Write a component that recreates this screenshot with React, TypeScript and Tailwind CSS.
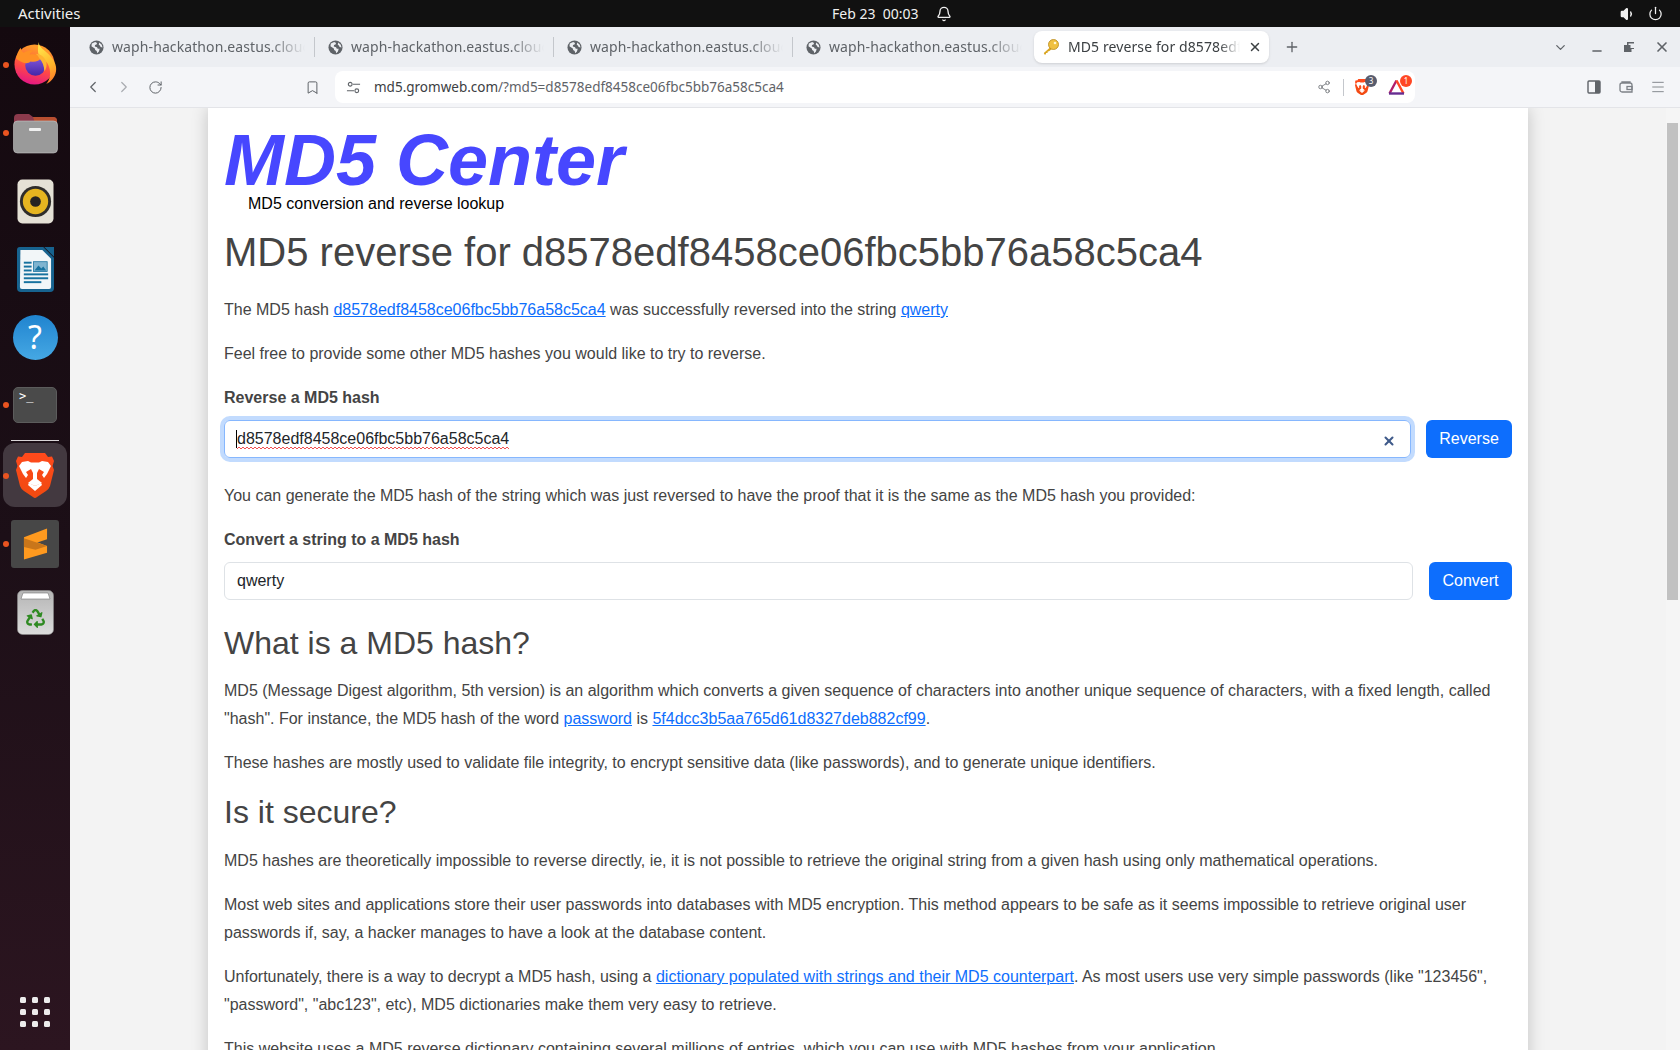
import { Bell, Bookmark, ChevronDown, ChevronLeft, ChevronRight, Menu, Minus, Plus, Power, RotateCw, Share2, Volume1, X } from "lucide-react";
import { FaRecycle } from "react-icons/fa";

const HASH = "d8578edf8458ce06fbc5bb76a58c5ca4";

function GlobeIcon() {
  return (
    <svg viewBox="0 0 16 16" className="w-[15px] h-[15px] shrink-0">
      <circle cx="8" cy="8" r="7.5" fill="#5f6368" />
      <path d="M3 3.6 6.6 2l2 1.2-.6 1.6-1.6.4-.2 1.6 2.4.8.8 1.6 2 .2-.8 2.8L8.8 14l-.6-2.4-1.6-1-.4-1.6L2.6 6.6Z" fill="#eceef2" />
      <path d="M11 2.6 13.6 5l.8 3-2-.6-.8-1.6L10.4 5Z" fill="#eceef2" />
    </svg>
  );
}

function Tab({ last }: { last?: boolean }) {
  return (
    <div className="w-[239px] h-[32px] flex items-center pl-[19px] shrink-0 relative">
      <GlobeIcon />
      <span className="ml-[8px] -mt-[2px] w-[193px] overflow-hidden whitespace-nowrap text-[14px] tracking-[0.1px] text-[#5f6368] [mask-image:linear-gradient(to_right,black_82%,transparent)]">
        waph-hackathon.eastus.cloudapp.azure.com
      </span>
      {!last && <div className="absolute -right-[6px] top-[6px] h-[20px] w-px bg-[#c4c7cc]" />}
    </div>
  );
}

function KeyIcon() {
  return (
    <svg viewBox="0 0 18 18" className="w-[18px] h-[18px] shrink-0">
      <path d="M8 9.5 1.8 15l.6 1.6 1.4-.2.3-1.3 1.4-.2.2-1.4 1.3-.3L10 11Z" fill="#d9a520" />
      <circle cx="11.5" cy="6.5" r="5" fill="#f0c040" stroke="#b8891a" strokeWidth="0.8" />
      <circle cx="13" cy="5" r="1.3" fill="#fff6d0" />
    </svg>
  );
}

function DockItem({ running, active, children }: { running?: boolean; active?: boolean; children: React.ReactNode }) {
  return (
    <div className="h-[68px] w-[70px] flex items-center justify-center relative shrink-0">
      {active && <div className="absolute left-[3px] top-[1px] w-[64px] h-[64px] rounded-[12px] bg-[#433940]" />}
      {running && <div className="absolute left-[3px] top-[31px] w-[6px] h-[6px] rounded-full bg-[#e95420]" />}
      <div className="relative">{children}</div>
    </div>
  );
}

function Firefox() {
  return (
    <svg viewBox="0 0 44 44" className="w-[43px] h-[43px] -mt-[4px]">
      <defs>
        <linearGradient id="ff1" x1="0.6" y1="0.1" x2="0.35" y2="1">
          <stop offset="0" stopColor="#ff9a2a" />
          <stop offset="0.55" stopColor="#ff4a45" />
          <stop offset="1" stopColor="#e31587" />
        </linearGradient>
        <linearGradient id="ff2" x1="0.4" y1="0" x2="0.7" y2="1">
          <stop offset="0" stopColor="#ffe54a" />
          <stop offset="0.6" stopColor="#ffb32a" />
          <stop offset="1" stopColor="#ff7a2a" />
        </linearGradient>
        <linearGradient id="ff3" x1="0.5" y1="0" x2="0.5" y2="1">
          <stop offset="0" stopColor="#8a5ce0" />
          <stop offset="1" stopColor="#4326a8" />
        </linearGradient>
      </defs>
      <circle cx="21" cy="23" r="20.5" fill="url(#ff1)" />
      <path d="M25 0c1 6 6 8 11 13 5 5 8 11 7 17-1 6-5 11-10 13 4-5 5-11 3-17-2-7-7-9-11-14-1-3 0-9 0-12Z" fill="url(#ff2)" />
      <circle cx="22" cy="24" r="10.5" fill="url(#ff3)" />
      <path d="M2 17C3 12 5 8 7 6c0 3 1 4 3 5 3-2 6-3 10-2-2 1-3 2-4 4 4-1 9 0 12 3-2 3-6 5-11 4-2 2-5 2-8 1-2-1-5-2-7-4Z" fill="#ff9125" />
      <path d="M22 12c5 0 9 3 11 8 1 4 0 8-2 10 0-5-2-10-5-13-1-2-2-4-4-5Z" fill="#ffb432" />
    </svg>
  );
}

function Files() {
  return (
    <svg viewBox="0 0 45 42" className="w-[45px] h-[42px]">
      <path d="M1 6a4 4 0 0 1 4-4h11l4 3h20a4 4 0 0 1 4 4v12H1Z" fill="#8c3a4c" />
      <path d="M20 5h20a4 4 0 0 1 4 4v8H24Z" fill="#b84f30" />
      <rect x="0.5" y="9" width="44" height="32" rx="4" fill="#9a9a9a" stroke="#c8c8c8" strokeWidth="0.6" />
      <rect x="16" y="16" width="12" height="3" rx="1" fill="#f0f0f0" />
    </svg>
  );
}

function Rhythmbox() {
  return (
    <svg viewBox="0 0 38 46" className="w-[37px] h-[45px]">
      <rect x="0.5" y="0.5" width="37" height="45" rx="5" fill="#e5e1d6" />
      <circle cx="19" cy="23" r="16" fill="#2f2d2b" />
      <circle cx="19" cy="23" r="13" fill="#e6b520" />
      <circle cx="19" cy="23" r="5.5" fill="#262422" />
    </svg>
  );
}

function Writer() {
  return (
    <svg viewBox="0 0 38 46" className="w-[37px] h-[45px]">
      <path d="M3 0h24l11 11v31a4 4 0 0 1-4 4H4a4 4 0 0 1-4-4V3a3 3 0 0 1 3-3Z" fill="#17638f" />
      <path d="M3.5 3H26l9 9v29a2 2 0 0 1-2 2H5a2 2 0 0 1-2-2Z" fill="#f2f6f8" />
      <path d="M28 0h10v10Z" fill="#17638f" />
      <g fill="#17729f">
        <rect x="7" y="15" width="8" height="2" />
        <rect x="7" y="19" width="8" height="2" />
        <rect x="7" y="23" width="8" height="2" />
        <rect x="7" y="27" width="25" height="2" />
        <rect x="7" y="31" width="25" height="2" />
        <rect x="7" y="35" width="18" height="2" />
      </g>
      <rect x="17" y="15" width="14" height="10" fill="#7fb4d0" stroke="#17729f" strokeWidth="0.8" />
      <path d="M18 24l4-5 3 3 2-2 3 4Z" fill="#17729f" />
    </svg>
  );
}

function Help() {
  return (
    <div className="w-[45px] h-[45px] rounded-full bg-linear-to-b from-[#1f84cf] to-[#45a8e4] flex items-center justify-center text-white text-[32px] leading-none font-['Noto_Sans',sans-serif]">
      ?
    </div>
  );
}

function Terminal() {
  return (
    <div className="w-[44px] h-[36px] rounded-[5px] bg-[#4a4a4a] border border-[#5c5c5c] pl-[5px] text-white text-[12px] leading-[16px] font-['DejaVu_Sans_Mono',monospace]">
      &gt;_
    </div>
  );
}

function BraveLion({ width }: { width: number }) {
  return (
    <svg viewBox="0 0 38 46" style={{ width, height: (width * 46) / 38 }} className="block">
      <defs>
        <linearGradient id="brv" x1="0" y1="0" x2="0" y2="1">
          <stop offset="0" stopColor="#ff4a1c" />
          <stop offset="1" stopColor="#f04a10" />
        </linearGradient>
      </defs>
      <path d="M9 0H29L32 4 36 3.5 38 8 36.5 13 38 17 34 33Q33 36 30 38L21 44Q19 46 17 44L8 38Q5 36 4 33L0 17 1.5 13 0 8 2 3.5 6 4Z" fill="url(#brv)" />
      <path d="M3 13 6 9 12 8 15 9.5H23L26 8 32 9 35 13 31 21 28 25 26 22 28 19 23 16 21 20V26L26 30 19 33 12 30 17 26V20L15 16 10 19 12 22 10 25 7 21Z" fill="#fff" />
      <path d="M13 30 19 33 25 30 26 32 19 38 12 32Z" fill="#fff" />
    </svg>
  );
}

function Sublime() {
  return (
    <div className="w-[48px] h-[48px] rounded-[3px] bg-[#474747] flex items-center justify-center">
      <svg viewBox="0 0 26 32" className="w-[25px] h-[32px]">
        <path d="M25 0v11L1 19V9Z" fill="#ff9a1f" />
        <path d="M1 9l24 9v7L1 32V19l12-4Z" fill="#ff9a1f" />
        <path d="M1 10l24 8-12 4L1 19Z" fill="#c9761a" />
      </svg>
    </div>
  );
}

function Trash() {
  return (
    <div className="relative w-[37px] h-[45px]">
      <svg viewBox="0 0 37 45" className="w-[37px] h-[45px]">
        <defs>
          <linearGradient id="tr" x1="0" y1="0" x2="0" y2="1">
            <stop offset="0" stopColor="#b5b5b5" />
            <stop offset="1" stopColor="#dcdcdc" />
          </linearGradient>
        </defs>
        <rect x="0.5" y="0.5" width="36" height="44" rx="5" fill="url(#tr)" stroke="#8a8a8a" strokeWidth="0.6" />
        <path d="M4 9l2-6h25l2 6Z" fill="#fff" stroke="#777" strokeWidth="0.6" />
      </svg>
      <FaRecycle size={19} className="absolute left-[9px] top-[19px] text-[#2f8a22]" />
    </div>
  );
}

function AppGrid() {
  return (
    <div className="grid grid-cols-3 gap-[6px]">
      {Array.from({ length: 9 }).map((_, i) => (
        <div key={i} className="w-[6px] h-[6px] rounded-[1.5px] bg-[#ececec]" />
      ))}
    </div>
  );
}

function Dock() {
  return (
    <aside className="w-[70px] shrink-0 pt-[4px] pb-[23px] flex flex-col bg-linear-to-b from-[#14090f] via-[#1c0f17] to-[#2c1520]">
      <DockItem running><Firefox /></DockItem>
      <DockItem running><Files /></DockItem>
      <DockItem><Rhythmbox /></DockItem>
      <DockItem><Writer /></DockItem>
      <DockItem><Help /></DockItem>
      <DockItem running><Terminal /></DockItem>
      <div className="h-[3px] flex items-center justify-center shrink-0">
        <div className="w-[48px] h-px bg-[#d8d4d6]" />
      </div>
      <DockItem running active><BraveLion width={38} /></DockItem>
      <DockItem running><Sublime /></DockItem>
      <DockItem><Trash /></DockItem>
      <div className="mt-auto flex justify-center"><AppGrid /></div>
    </aside>
  );
}

function TabBar() {
  return (
    <div className="h-[40px] bg-[#eceef2] flex items-start pt-[4px] text-[#3c4043] shrink-0">
      <Tab />
      <Tab />
      <Tab />
      <Tab last />
      <div className="w-[235px] h-[32px] ml-[8px] bg-white rounded-[8px] shadow-sm flex items-center pl-[8px] shrink-0">
        <KeyIcon />
        <span className="ml-[8px] -mt-[2px] w-[172px] mr-[6px] overflow-hidden whitespace-nowrap text-[14px] tracking-[0.1px] text-[#3c4043] [mask-image:linear-gradient(to_right,black_88%,transparent)]">
          MD5 reverse for {HASH}
        </span>
        <X size={14} strokeWidth={2.5} className="ml-[2px] text-[#3c4043]" />
      </div>
      <Plus size={16} strokeWidth={2} className="ml-[15px] mt-[8px] text-[#5f6368]" />
      <div className="ml-auto flex items-center h-[32px] pr-[10px] text-[#5f6368]">
        <ChevronDown size={15} className="mr-[22px]" />
        <Minus size={14} strokeWidth={2.5} className="mr-[19px] mt-[8px]" />
        <svg viewBox="0 0 12 12" className="w-[12px] h-[12px] mr-[19px]">
          <path d="M4 1h7v7H8.5v3H1V4h3Z M5.5 2.5V4h2v3H11V2.5Z" fill="#5f6368" fillRule="evenodd" />
        </svg>
        <X size={16} strokeWidth={2.5} />
      </div>
    </div>
  );
}

function Toolbar() {
  return (
    <div className="h-[41px] bg-[#f4f5f8] border-b border-[#e3e4e8] flex items-start pt-[4px] shrink-0 text-[#5f6368]">
      <div className="flex items-center h-[32px] pl-[14px]">
        <ChevronLeft size={18} strokeWidth={1.6} />
        <ChevronRight size={18} strokeWidth={1.6} className="ml-[13px] text-[#a8abb0]" />
        <RotateCw size={15} strokeWidth={1.6} className="ml-[15px]" />
        <Bookmark size={15} strokeWidth={1.6} className="ml-[142px]" />
      </div>
      <div className="ml-[15px] w-[1080px] h-[32px] bg-white rounded-[8px] flex items-center pl-[11px]">
        <svg viewBox="0 0 16 16" className="w-[15px] h-[15px] shrink-0" fill="none" stroke="#5f6368" strokeWidth="1.2">
          <circle cx="4.5" cy="4.5" r="2" />
          <path d="M7.5 4.5H15M1 11.5h7.5" />
          <circle cx="11.5" cy="11.5" r="2" />
        </svg>
        <span className="ml-[13px] text-[13.5px] text-[#3c4043]">
          md5.gromweb.com<span className="text-[#5f6368]">/?md5={HASH}</span>
        </span>
        <Share2 size={14} strokeWidth={1.3} className="ml-auto mr-[12px]" />
        <div className="w-px h-[17px] bg-[#c4c7cc] mr-[11px]" />
        <div className="relative mr-[19px]">
          <BraveLion width={14} />
          <div className="absolute -top-[4px] -right-[8px] w-[12px] h-[12px] rounded-full bg-[#585c6d] text-white text-[8px] leading-[12px] text-center">3</div>
        </div>
        <div className="relative mr-[10px]">
          <svg viewBox="0 0 17 16" className="block w-[17px] h-[16px]">
            <path d="M8.5 1.5 1.5 14.5" stroke="#b01f6a" strokeWidth="2.4" />
            <path d="M8.5 1.5 15.5 14.5" stroke="#ff4724" strokeWidth="2.4" />
            <path d="M1 14.5h15" stroke="#662d91" strokeWidth="2.4" />
            <path d="M8.5 7 5.5 12.5h6Z" fill="#fff" />
          </svg>
          <div className="absolute -top-[4px] -right-[7px] w-[12px] h-[12px] rounded-full bg-[#ff4724] text-white text-[8px] leading-[12px] text-center">1</div>
        </div>
      </div>
      <div className="ml-[172px] flex items-center h-[32px]">
        <svg viewBox="0 0 14 14" className="w-[14px] h-[14px]">
          <rect x="1" y="1" width="12" height="12" rx="1" fill="none" stroke="#5f6368" strokeWidth="1.4" />
          <rect x="8" y="1" width="5" height="12" fill="#5f6368" />
        </svg>
        <svg viewBox="0 0 14 14" className="w-[14px] h-[14px] ml-[18px]" fill="none" stroke="#7d8187" strokeWidth="1.3">
          <path d="M3 3V2h8v1M1 5a2 2 0 0 1 2-2h8a2 2 0 0 1 2 2v7H3a2 2 0 0 1-2-2Z" />
          <rect x="8" y="6.5" width="5" height="3" />
        </svg>
        <Menu size={16} strokeWidth={1.4} className="ml-[17px] text-[#7d8187]" />
      </div>
    </div>
  );
}

function A({ children }: { children: React.ReactNode }) {
  return <a className="text-[#0d6efd] underline">{children}</a>;
}

function Squiggle() {
  return (
    <svg className="absolute left-[13px] top-[26px] w-[272px] h-[4px]">
      <defs>
        <pattern id="squig" width="4" height="4" patternUnits="userSpaceOnUse">
          <path d="M0 3 2 1 4 3" fill="none" stroke="#ef3b3b" strokeWidth="0.9" />
        </pattern>
      </defs>
      <rect width="272" height="4" fill="url(#squig)" />
    </svg>
  );
}

function Page() {
  return (
    <main className="w-[1320px] ml-[138px] min-h-[1100px] bg-white px-[16px] shadow-[0_0_16px_rgba(0,0,0,0.2)] text-[16px] leading-[28px] text-[#444] font-['Liberation_Sans',sans-serif]">
      <div className="h-[84px] pt-[10px] text-[72px] leading-[84px] font-bold italic text-[#4747ff] whitespace-nowrap">MD5 Center</div>
      <div className="pl-[24px] text-black leading-[24px]">MD5 conversion and reverse lookup</div>
      <h1 className="text-[40px] leading-[48px] mt-[12px] mb-[20px]">MD5 reverse for {HASH}</h1>

      <p className="mb-4">The MD5 hash <A>{HASH}</A> was successfully reversed into the string <A>qwerty</A></p>
      <p className="mb-4">Feel free to provide some other MD5 hashes you would like to try to reverse.</p>

      <label className="block font-bold mb-[8px]">Reverse a MD5 hash</label>
      <div className="flex gap-[16px] mb-[24px]">
        <div className="relative flex-1 mr-[-1px]">
          <input
            readOnly
            spellCheck={false}
            value={HASH}
            className="block w-full h-[38px] rounded-[6px] border border-[#86b7fe] px-[12px] text-[#212529] shadow-[0_0_0_4px_rgba(13,110,253,0.25)] outline-none"
          />
          <Squiggle />
          <div className="absolute left-[12px] top-[10px] w-px h-[18px] bg-black" />
          <X size={14} strokeWidth={3.5} className="absolute right-[15px] top-[14px] text-[#3f5a8a]" />
        </div>
        <button className="w-[86px] h-[38px] rounded-[6px] bg-[#0d6efd] text-white shrink-0">Reverse</button>
      </div>

      <p className="mb-4">You can generate the MD5 hash of the string which was just reversed to have the proof that it is the same as the MD5 hash you provided:</p>

      <label className="block font-bold mb-[8px]">Convert a string to a MD5 hash</label>
      <div className="flex gap-[16px] mb-[24px]">
        <input
          readOnly
          value="qwerty"
          className="block flex-1 h-[38px] rounded-[6px] border border-[#dee2e6] px-[12px] text-[#212529] outline-none"
        />
        <button className="w-[83px] h-[38px] rounded-[6px] bg-[#0d6efd] text-white shrink-0">Convert</button>
      </div>

      <h2 className="text-[32px] leading-[38px] mb-[15px]">What is a MD5 hash?</h2>
      <p className="mb-4">
        MD5 (Message Digest algorithm, 5th version) is an algorithm which converts a given sequence of characters into another unique sequence of characters, with a fixed length, called "hash". For instance, the MD5 hash of the word <A>password</A> is <A>5f4dcc3b5aa765d61d8327deb882cf99</A>.
      </p>
      <p className="mb-4">These hashes are mostly used to validate file integrity, to encrypt sensitive data (like passwords), and to generate unique identifiers.</p>

      <h2 className="text-[32px] leading-[38px] mb-4">Is it secure?</h2>
      <p className="mb-4">MD5 hashes are theoretically impossible to reverse directly, ie, it is not possible to retrieve the original string from a given hash using only mathematical operations.</p>
      <p className="mb-4">Most web sites and applications store their user passwords into databases with MD5 encryption. This method appears to be safe as it seems impossible to retrieve original user passwords if, say, a hacker manages to have a look at the database content.</p>
      <p className="mb-4">
        Unfortunately, there is a way to decrypt a MD5 hash, using a <A>dictionary populated with strings and their MD5 counterpart</A>. As most users use very simple passwords (like "123456", "password", "abc123", etc), MD5 dictionaries make them very easy to retrieve.
      </p>
      <p className="mb-4">This website uses a MD5 reverse dictionary containing several millions of entries, which you can use with MD5 hashes from your application.</p>
    </main>
  );
}

export default function App() {
  return (
    <div className="h-screen w-screen overflow-hidden flex flex-col font-['Noto_Sans',sans-serif]">
      <header className="h-[27px] bg-[#111] text-[#f0f0f0] text-[14px] flex items-center relative shrink-0">
        <span className="ml-[18px] text-[15px]">Activities</span>
        <span className="absolute left-[832px] whitespace-pre">Feb 23  00:03</span>
        <Bell size={16} className="absolute left-[936px]" />
        <Volume1 size={16} fill="#f0f0f0" className="absolute left-[1620px]" />
        <Power size={15} className="absolute left-[1648px]" />
      </header>
      <div className="flex-1 flex min-h-0">
        <Dock />
        <div className="flex-1 flex flex-col min-w-0">
          <TabBar />
          <Toolbar />
          <div className="flex-1 flex min-h-0 overflow-hidden bg-[#f3f3f3]">
            <div className="flex-1 min-w-0 overflow-hidden"><Page /></div>
            <div className="w-[14px] shrink-0 bg-[#f5f5f5] pl-[1px] pr-[2px] pt-[15px]">
              <div className="h-[477px] bg-[#c1c1c1]" />
            </div>
          </div>
        </div>
      </div>
    </div>
  );
}
